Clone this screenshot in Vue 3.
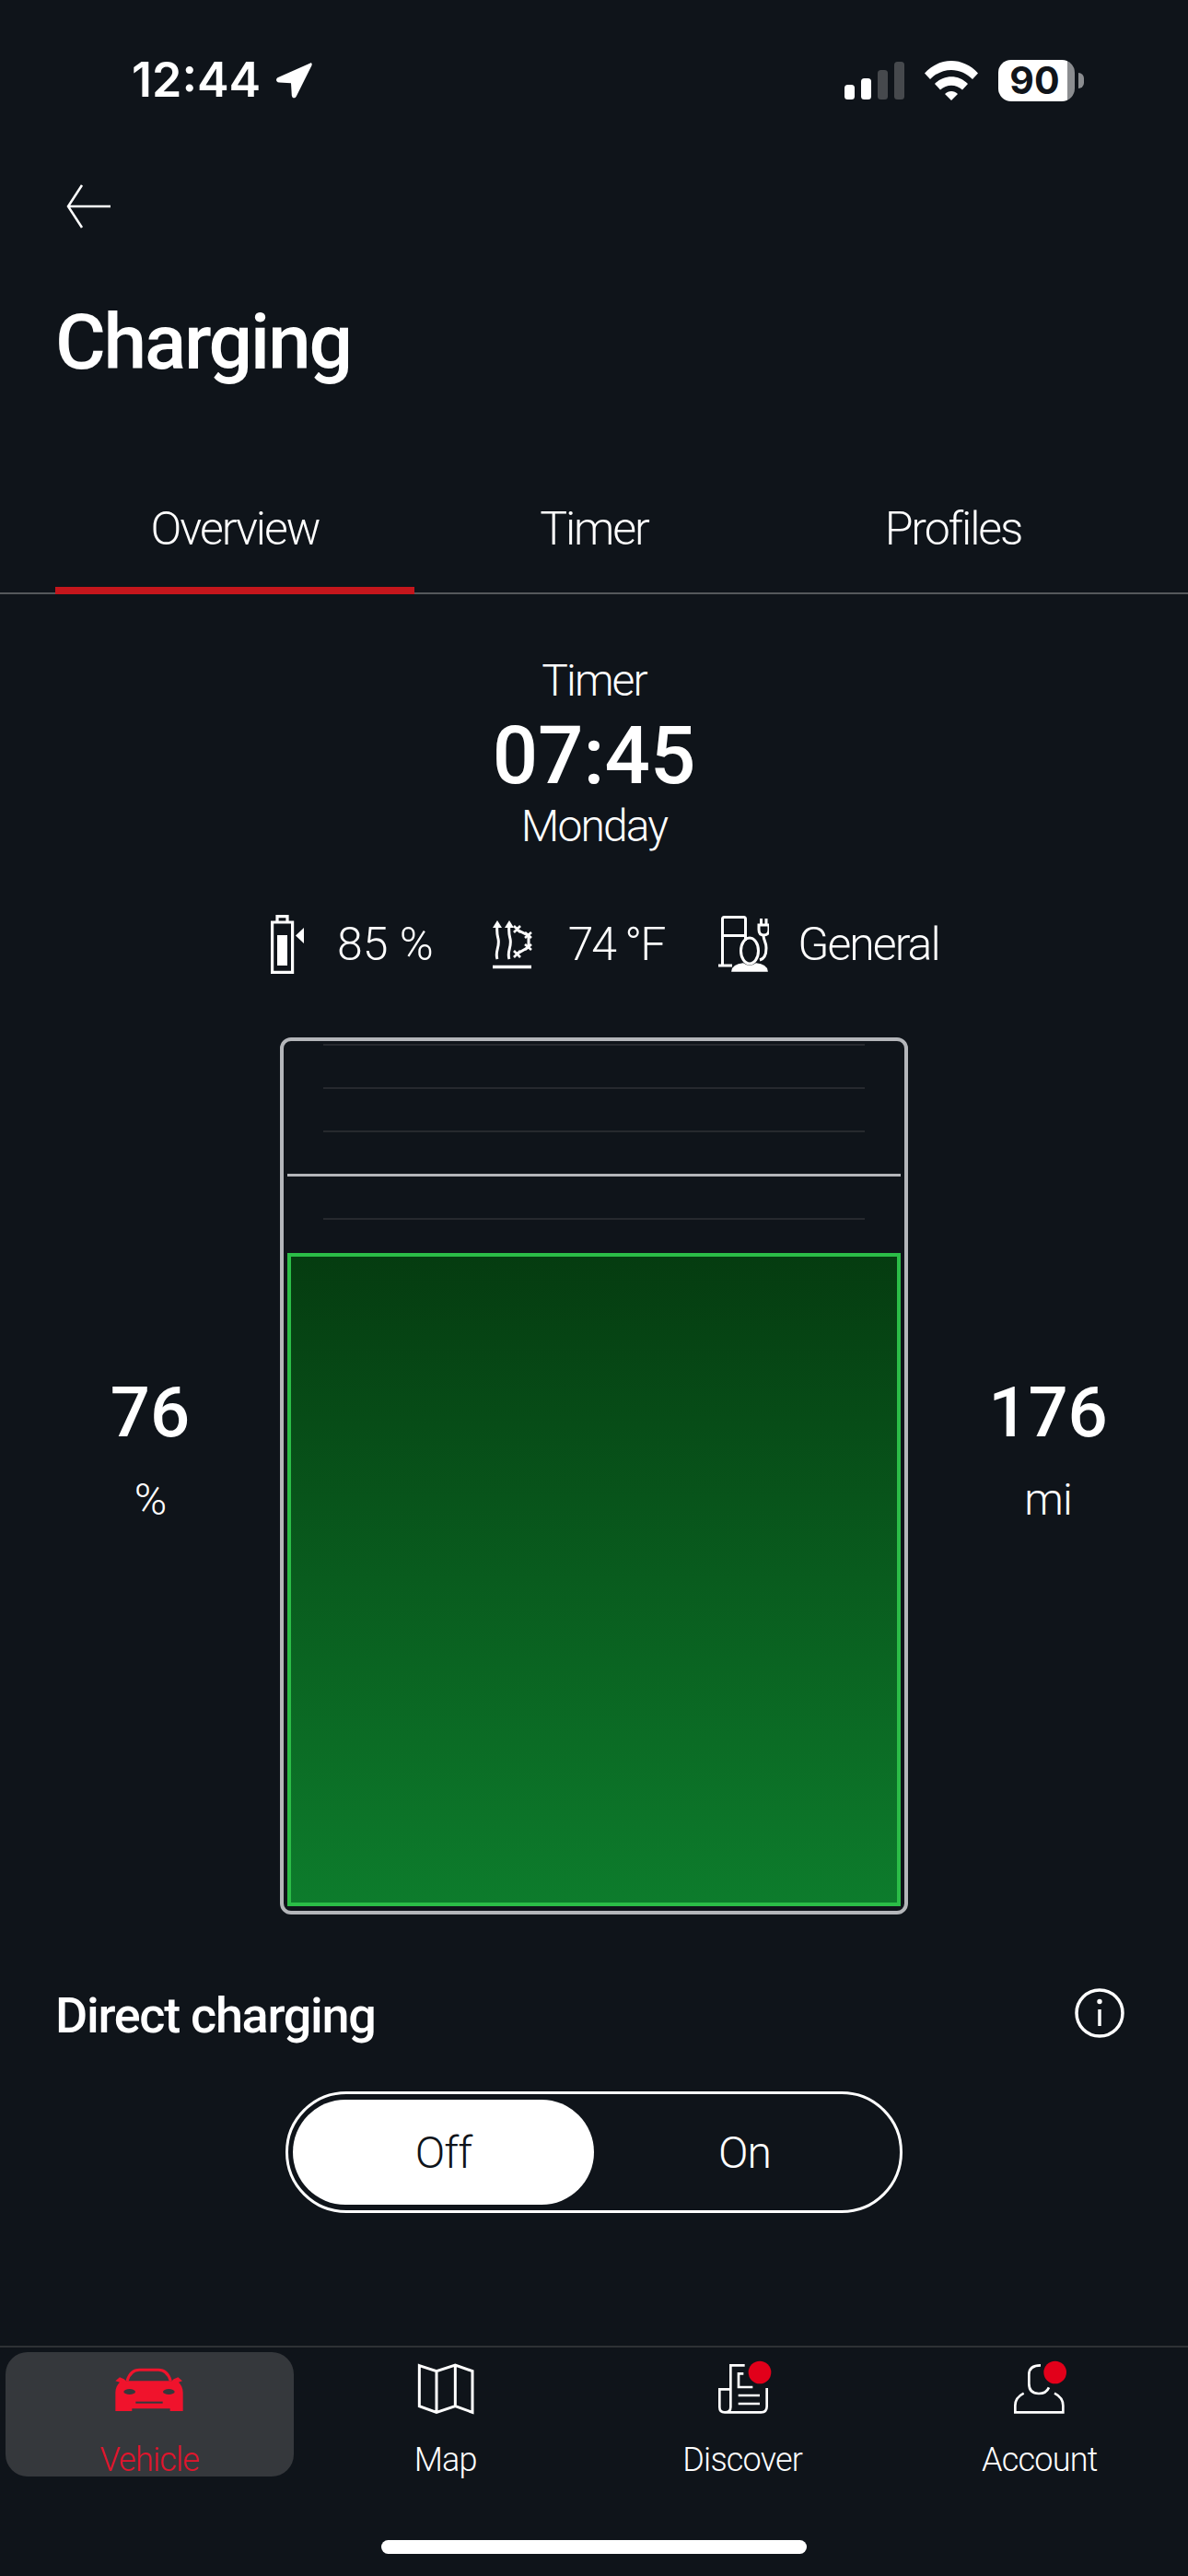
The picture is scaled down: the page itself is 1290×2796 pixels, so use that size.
<script setup>
const tabs = [
  { label: 'Overview', active: true },
  { label: 'Timer', active: false },
  { label: 'Profiles', active: false },
]
const ticks = [
  { id: 1, strong: false },
  { id: 2, strong: false },
  { id: 3, strong: false },
  { id: 4, strong: true },
  { id: 5, strong: false },
]
</script>

<template>
  <div class="page">
    <header class="status">
      <div class="status-left">
        <span class="clock">12:44</span>
        <svg class="arrow-loc" viewBox="0 0 40 40" width="40" height="40">
          <path d="M38 1.500 3 17c-3 1.500-2.500 5 1 5.500l13 .8 .8 13.500c.5 3 3.500 3.500 5 .7L39.500 4c.7-2-.5-3.200-1.500-2.500Z" fill="#fff" />
        </svg>
      </div>
      <div class="status-right">
        <svg viewBox="0 0 65 41" width="65" height="41">
          <rect x="0" y="25" width="11" height="16" rx="3.500" fill="#fff" />
          <rect x="18" y="18" width="11" height="23" rx="3.500" fill="#fff" />
          <rect x="36" y="9" width="11" height="32" rx="3.500" fill="#46494d" />
          <rect x="54" y="0" width="11" height="41" rx="3.500" fill="#46494d" />
        </svg>
        <svg viewBox="0 0 58 43" width="58" height="43">
          <path d="M0 13.500C16-4.500 42-4.500 58 13.500l-6 6.500C39 6.500 19 6.500 6 20Z" fill="#fff" />
          <path d="M11 25c10-10.500 26-10.500 36 0l-6 6.500c-7-6.500-17-6.500-24 0Z" fill="#fff" />
          <path d="M22 36c4-4 10-4 14 0l-7 7Z" fill="#fff" />
        </svg>
        <div class="phone-battery">
          <span class="phone-battery-level">90</span>
          <span class="phone-battery-nub"></span>
        </div>
      </div>
    </header>

    <div class="back">
      <svg viewBox="0 0 48 48" width="48" height="48" fill="none" stroke="#fff" stroke-width="2.500">
        <path d="M48 24H2M17 1 2 24l15 23" />
      </svg>
    </div>

    <h1 class="title">Charging</h1>

    <nav class="tabs">
      <div v-for="tab in tabs" :key="tab.label" class="tab" :class="{ 'tab-active': tab.active }">{{ tab.label }}</div>
    </nav>

    <section class="timer">
      <div class="timer-label">Timer</div>
      <div class="timer-time">07:45</div>
      <div class="timer-label">Monday</div>
    </section>

    <section class="settings">
      <div class="setting setting-battery">
        <svg viewBox="0 0 45 64" width="45" height="64" fill="none" stroke="#fff" stroke-width="3.200">
          <path d="M1.600 8h22v54.400h-22ZM7 8V1.600h11V8" />
          <rect x="7" y="22" width="11" height="33" fill="#fff" stroke="none" />
          <path d="M36 14 27 22.500 36 31Z" fill="#fff" stroke="none" />
        </svg>
        <span>85 %</span>
      </div>
      <div class="setting setting-climate">
        <svg viewBox="0 0 46 56" width="46" height="56" fill="none" stroke="#fff" stroke-width="3">
          <path d="M6 44c-3-8 3-13 1-22-1-4-2-7-1-15M19 44c-3-8 3-13 1-22-1-4-2-7-1-15" />
          <path d="M6 2l-5 8h10ZM19 2l-5 8h10Z" fill="#fff" stroke="none" />
          <path d="M1 52.500h42" stroke-width="3.500" />
          <path d="M27 12 40 18.500 40 31 27 38.500" />
          <path d="M24 8l7 7M31 8l-7 7M24 35l7 7M31 35l-7 7M36 15l7 6M43 15l-7 6M36 28l7 6M43 28l-7 6" stroke-width="2.600" />
        </svg>
        <span>74 °F</span>
      </div>
      <div class="setting setting-profile">
        <svg viewBox="0 0 56 62" width="56" height="62" fill="none" stroke="#fff" stroke-width="3">
          <path d="M5.500 53V3.500q0-2 2-2h21q2 0 2 2V27M5.500 21.500h25M1 54h15" />
          <ellipse cx="35" cy="38" rx="9.500" ry="14" />
          <path d="M16 60q1-7 12-8 7 5 14 0 11 1 12 8Z" fill="#fff" stroke="#fff" stroke-width="1.500" />
          <path d="M50 21c0 6 3 7 3 14 0 8-3 12-7 13" />
          <path d="M45 10h11v5q0 6-5.500 6T45 15Z" stroke-width="3" />
          <path d="M47.500 3v7M53 3v7" stroke-width="3" />
        </svg>
        <span class="word">General</span>
      </div>
    </section>

    <section class="charge">
      <div class="stat stat-left">
        <div class="stat-value">76</div>
        <div class="stat-unit">%</div>
      </div>
      <div class="gauge">
        <div class="ticks">
          <div v-for="tick in ticks" :key="tick.id" class="tick" :class="{ 'tick-strong': tick.strong }"></div>
        </div>
        <div class="fill"></div>
      </div>
      <div class="stat">
        <div class="stat-value">176</div>
        <div class="stat-unit">mi</div>
      </div>
    </section>

    <section class="direct">
      <h2 class="direct-title">Direct charging</h2>
      <svg class="direct-info" viewBox="0 0 54 54" width="54" height="54" fill="none" stroke="#fff" stroke-width="3.500">
        <circle cx="27" cy="27" r="25" />
        <path d="M27 23v18" />
        <circle cx="27" cy="14.500" r="2.700" fill="#fff" stroke="none" />
      </svg>
    </section>

    <div class="toggle">
      <div class="toggle-option toggle-option-on">Off</div>
      <div class="toggle-option">On</div>
    </div>

    <nav class="bottom-nav">
      <div class="nav-item nav-item-active">
        <svg viewBox="-24 0 360 240" width="120" height="80">
          <path d="M84 88C92 62 104 52 124 52h62c20 0 32 10 40 36" fill="none" stroke="#f0132c" stroke-width="9" />
          <path d="M46 88l14-12 14 6 6 6h150l6-6 14-6 14 12-12 4c8 8 14 18 14 34v60h-42v-8H100v8H46v-60c0-16 6-26 14-34Z" fill="#f0132c" />
          <ellipse cx="92" cy="123" rx="19" ry="9" fill="#35383c" />
          <ellipse cx="220" cy="123" rx="19" ry="9" fill="#35383c" />
          <rect x="112" y="155" width="88" height="6" fill="#35383c" />
        </svg>
        <span>Vehicle</span>
      </div>
      <div class="nav-item">
        <svg viewBox="942 0 360 240" width="120" height="80" fill="none" stroke="#fff" stroke-width="9">
          <path d="M1036 38l56 18 61-20 56 20v134l-56-20-61 20-56-20ZM1092 56v134M1153 36v134" />
        </svg>
        <span>Map</span>
      </div>
      <div class="nav-item">
        <svg viewBox="-42 0 360 240" width="120" height="80" fill="none" stroke="#fff" stroke-width="8">
          <path d="M146 37H100v78H64v58q0 17 17 17h118q19 0 19-19v-60M100 115v58q0 17-19 17" />
          <path d="M142 64h-16v44h46M125 135h70M125 162h70" />
          <circle cx="195" cy="60" r="37" fill="#e2001a" stroke="none" />
        </svg>
        <span>Discover</span>
      </div>
      <div class="nav-item">
        <svg viewBox="927 0 360 240" width="120" height="80" fill="none" stroke="#fff" stroke-width="8">
          <path d="M1110 37q-38 0-38 30v30q0 32 32 32 24 0 33-20" />
          <path d="M1055 128q-28 14-28 40v22h156v-22q0-26-28-40" />
          <circle cx="1157" cy="60" r="37" fill="#e2001a" stroke="none" />
        </svg>
        <span>Account</span>
      </div>
    </nav>

    <div class="home-indicator"></div>
  </div>
</template>

<style>
html, body { margin: 0; background: #0f141a; }
</style>

<style scoped>
.page {
  width: 1290px;
  height: 2796px;
  background: #0f141a;
  color: #fff;
  font-family: Roboto, "Liberation Sans", sans-serif;
  overflow: hidden;
}

.status {
  height: 174px;
  box-sizing: border-box;
  padding: 64px 123px 0 143px;
  display: flex;
  justify-content: space-between;
  align-items: flex-start;
}
.status-left { display: flex; align-items: center; gap: 16px; height: 46px; }
.clock { font-family: Inter, sans-serif; font-size: 52px; font-weight: 600; line-height: 46px; }
.status-right { display: flex; align-items: center; gap: 22px; height: 46px; }
.phone-battery {
  position: relative;
  width: 83px;
  height: 45px;
  border-radius: 14px;
  box-sizing: border-box;
  background: linear-gradient(90deg, #fff 90%, #8b8d90 90%);
  color: #10141a;
  font-family: Inter, sans-serif;
  font-size: 41px;
  font-weight: 700;
  line-height: 45px;
  text-align: center;
}
.phone-battery-level { display: block; padding-right: 4px; }
.phone-battery-nub {
  position: absolute;
  left: 87px;
  top: 14px;
  width: 6px;
  height: 17px;
  border-radius: 0 6px 6px 0;
  background: #8b8d90;
}

.back { height: 74px; padding-left: 72px; padding-top: 26px; box-sizing: border-box; display: flex; }

.title {
  margin: 74px 0 0;
  padding-left: 60px;
  font-size: 84px;
  line-height: 100px;
  font-weight: 500;
  letter-spacing: -2.300px;
}

.tabs {
  margin-top: 98px;
  height: 125px;
  box-sizing: border-box;
  padding: 0 60px;
  display: flex;
  border-bottom: 2px solid #55585c;
}
.tab {
  flex: 1;
  height: 125px;
  box-sizing: border-box;
  padding-top: 26px;
  line-height: 56px;
  text-align: center;
  font-size: 50px;
  font-weight: 300;
  letter-spacing: -2.100px;
}
.tab-active { border-bottom: 8px solid #c4161c; }

.timer { margin-top: 66px; text-align: center; }
.timer-label { font-size: 48px; font-weight: 300; line-height: 56px; letter-spacing: -1.900px; }
.timer-time { font-size: 87px; font-weight: 500; line-height: 100px; margin: 3px 0 -1px; }

.settings {
  margin-top: 65px;
  height: 70px;
  padding-left: 294px;
  display: flex;
  align-items: center;
  font-size: 50px;
  font-weight: 300;
}
.setting { display: flex; align-items: center; }
.word { letter-spacing: -2px; }
.setting-battery { gap: 27px; }
.setting-climate { gap: 37px; margin-left: 63px; letter-spacing: -2px; }
.setting-profile { gap: 31px; margin-left: 58px; }

.charge {
  margin-top: 66px;
  display: flex;
  align-items: center;
}
.stat { width: 304px; box-sizing: border-box; text-align: center; padding-bottom: 60px; }
.stat-left { padding-left: 22px; }
.stat-value { font-size: 76px; font-weight: 500; line-height: 90px; }
.stat-unit { font-size: 48px; font-weight: 300; line-height: 56px; margin-top: 22px; letter-spacing: -1px; }

.gauge {
  width: 682px;
  height: 952px;
  box-sizing: border-box;
  border: 4px solid #b4b6ba;
  border-radius: 12px;
  padding: 3px 4px 5px;
  display: flex;
  flex-direction: column;
}
.ticks { display: flex; flex-direction: column; gap: 45px; height: 227px; align-items: center; }
.tick { width: 588px; height: 2px; background: #26292e; flex: none; }
.tick-strong { width: 100%; height: 3px; background: #b4b6ba; }
.fill {
  flex: 1;
  box-sizing: border-box;
  border: 4px solid #2bbd47;
  background: linear-gradient(180deg, #053c10 0%, #0d7c2c 100%);
}

.direct {
  margin-top: 78px;
  height: 64px;
  padding: 0 69px 0 60px;
  display: flex;
  justify-content: space-between;
  align-items: center;
}
.direct-title { margin: 0; font-size: 54px; font-weight: 500; line-height: 64px; letter-spacing: -1.300px; }
.direct-info { margin-top: -6px; }

.toggle {
  margin: 50px auto 0;
  width: 670px;
  height: 132px;
  box-sizing: border-box;
  border: 3px solid #fff;
  border-radius: 66px;
  padding: 6px 5px;
  display: flex;
}
.toggle-option {
  flex: 1;
  border-radius: 58px;
  font-size: 48px;
  font-weight: 300;
  letter-spacing: -1px;
  display: flex;
  align-items: center;
  justify-content: center;
}
.toggle-option-on { background: #fff; color: #0f141a; }

.bottom-nav {
  margin-top: 144px;
  height: 144px;
  box-sizing: border-box;
  border-top: 2px solid #2e3135;
  display: grid;
  grid-template-columns: repeat(4, 1fr);
  align-items: start;
}
.nav-item {
  display: flex;
  flex-direction: column;
  align-items: center;
  padding-top: 7px;
  box-sizing: border-box;
  font-size: 36px;
  font-weight: 300;
  letter-spacing: -0.800px;
  line-height: 42px;
}
.nav-item svg { flex: none; }
.nav-item span { margin-top: 14px; }
.nav-item-active {
  margin: 5px 4px 0 6px;
  padding-top: 2px;
  height: 135px;
  border-radius: 24px;
  background: #35383c;
  color: #e2142c;
}

.home-indicator {
  margin: 67px auto 0;
  width: 462px;
  height: 15px;
  border-radius: 8px;
  background: #fff;
}
</style>
